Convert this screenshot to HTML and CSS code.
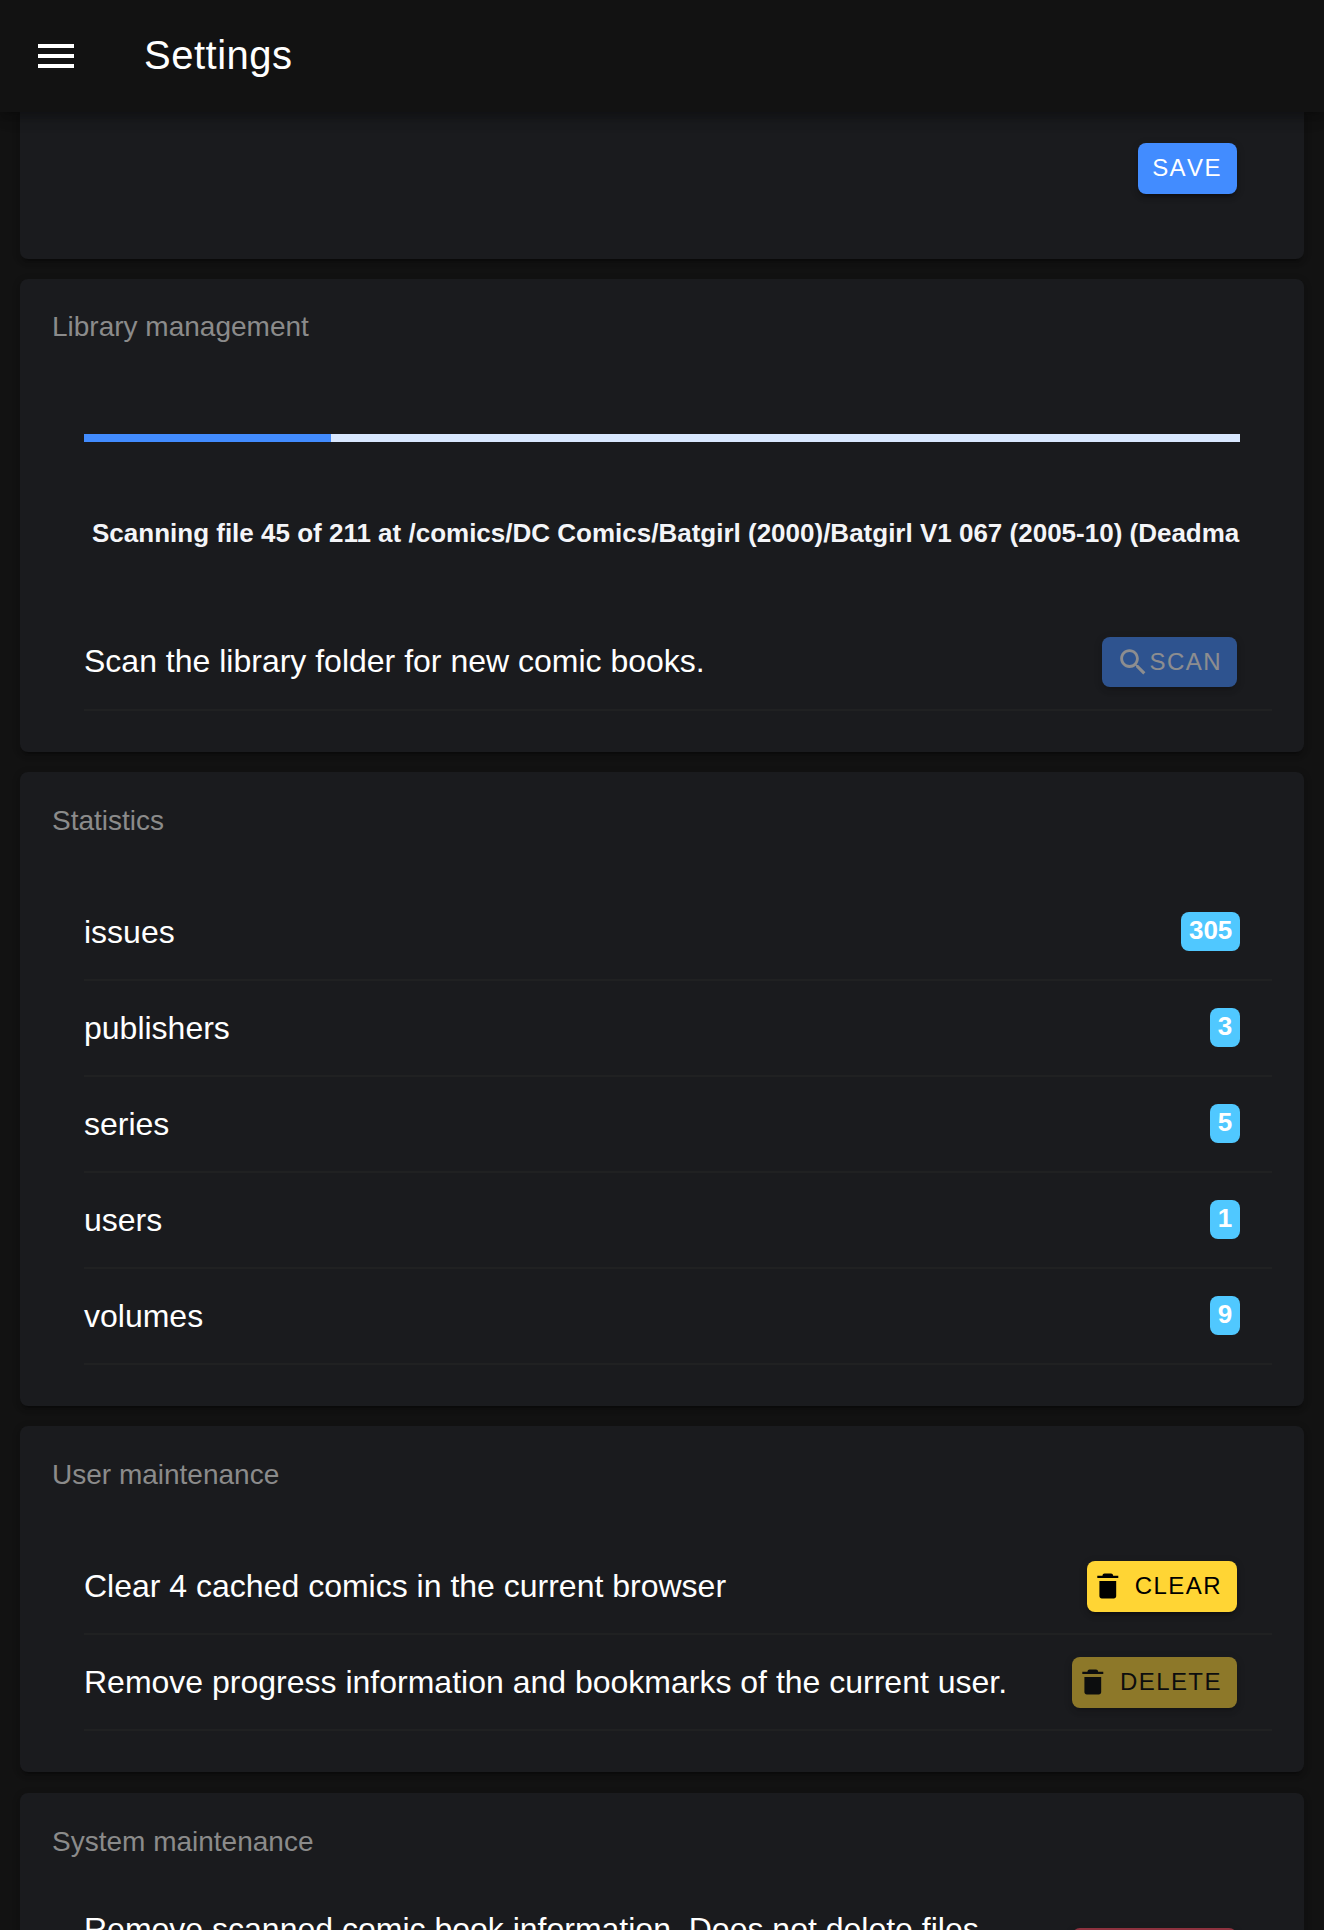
FILE: index.html
```html
<!DOCTYPE html>
<html lang="en">
<head>
<meta charset="utf-8">
<title>Settings</title>
<link rel="stylesheet" href="styles.css">
</head>
<body>
<svg class="sprite" width="0" height="0" aria-hidden="true">
  <symbol id="trash" viewBox="0 0 512 512">
    <path d="M128 184v228c0 20 16 36 36 36h184c20 0 36-16 36-36V184zM416 102h-78c-4-22-14-32-32-32H206c-18 0-28 10-32 32H96v36h320z"/>
  </symbol>
</svg>
<header class="header">
  <svg class="menu-icon" viewBox="0 0 512 512"><path d="M64 384h384v-42.7H64zm0-106.7h384v-42.6H64zM64 128v42.7h384V128z"/></svg>
  <h1 class="title">Settings</h1>
</header>
<main class="content">
  <section class="card card-scrolled">
    <button class="button primary">SAVE</button>
  </section>

  <section class="card">
    <h2 class="subtitle">Library management</h2>
    <div class="item plain"><div class="progress"><div class="progress-value" style="width:21.33%"></div></div></div>
    <div class="item plain scan-status"><span class="badge status">Scanning file 45 of 211 at /comics/DC Comics/Batgirl (2000)/Batgirl V1 067 (2005-10) (Deadma</span></div>
    <div class="item">
      <span class="label">Scan the library folder for new comic books.</span>
      <button class="button primary" disabled><svg class="icon" viewBox="0 0 512 512"><path d="M337.509 305.372h-17.501l-6.571-5.486c20.791-25.181 33.922-57.054 33.922-93.257C347.358 127.632 283.896 64 205.135 64 127.452 64 64 127.632 64 206.629s63.452 142.628 142.225 142.628c35.011 0 67.831-13.167 92.991-34.008l6.561 5.487v17.551L415.18 448 448 415.086 337.509 305.372zm-131.284 0c-54.702 0-98.463-43.887-98.463-98.743 0-54.858 43.761-98.742 98.463-98.742 54.7 0 98.462 43.884 98.462 98.742 0 54.856-43.762 98.743-98.462 98.743z"/></svg>SCAN</button>
    </div>
  </section>

  <section class="card">
    <h2 class="subtitle subtitle-low">Statistics</h2>
    <div class="item"><span class="label">issues</span><span class="badge">305</span></div>
    <div class="item"><span class="label">publishers</span><span class="badge">3</span></div>
    <div class="item"><span class="label">series</span><span class="badge">5</span></div>
    <div class="item"><span class="label">users</span><span class="badge">1</span></div>
    <div class="item"><span class="label">volumes</span><span class="badge">9</span></div>
  </section>

  <section class="card">
    <h2 class="subtitle subtitle-low">User maintenance</h2>
    <div class="item">
      <span class="label">Clear 4 cached comics in the current browser</span>
      <button class="button warning"><svg class="icon icon-start"><use href="#trash"/></svg>CLEAR</button>
    </div>
    <div class="item">
      <span class="label">Remove progress information and bookmarks of the current user.</span>
      <button class="button warning" disabled><svg class="icon icon-start"><use href="#trash"/></svg>DELETE</button>
    </div>
  </section>

  <section class="card">
    <h2 class="subtitle subtitle-low">System maintenance</h2>
    <div class="item item-top">
      <span class="label">Remove scanned comic book information. Does not delete files.</span>
      <button class="button danger" disabled><svg class="icon icon-start"><use href="#trash"/></svg>DELETE</button>
    </div>
  </section>
</main>
</body>
</html>
```
FILE: styles.css
```css
* {
  box-sizing: border-box;
}

body {
  margin: 0;
  height: 1930px;
  overflow: hidden;
  background: #121212;
  color: #fff;
  font-family: "Liberation Sans", Arial, sans-serif;
}

.sprite {
  display: none;
}

.header {
  position: relative;
  z-index: 1;
  display: flex;
  align-items: center;
  gap: 64px;
  height: 112px;
  padding: 0 32px;
  background: #121212;
  box-shadow: 0 4px 8px -2px rgba(0, 0, 0, .2), 0 8px 10px rgba(0, 0, 0, .14), 0 2px 20px rgba(0, 0, 0, .12);
}

.menu-icon {
  width: 48px;
  height: 48px;
  fill: currentColor;
}

.title {
  margin: 0 0 2px;
  font-size: 40px;
  font-weight: 400;
  letter-spacing: .0125em;
}

.content {
  display: flex;
  flex-direction: column;
  gap: 20.5px;
  height: 1818px;
  padding: 0 19.7px 0 20px;
  overflow: hidden;
}

.card {
  flex: none;
  padding: 32px 32px 40.8px;
  border-radius: 8px;
  background: #1a1b1e;
  box-shadow: 0 6px 2px -4px rgba(0, 0, 0, .2), 0 4px 4px rgba(0, 0, 0, .14), 0 2px 10px rgba(0, 0, 0, .12);
}

.card-scrolled {
  display: flex;
  justify-content: flex-end;
  height: 146.5px;
  padding: 31.3px 64px 0;
  border-radius: 0 0 8px 8px;
}

.subtitle {
  margin: 0;
  height: 81px;
  color: #8b8b8b;
  font-size: 28px;
  font-weight: 400;
  line-height: 32px;
}

.subtitle-low {
  padding-top: 1px;
}

.item {
  display: flex;
  align-items: center;
  justify-content: space-between;
  height: 96px;
  margin-left: 32px;
  padding-right: 32px;
  border-bottom: 2px solid #202122;
}

.plain {
  border-bottom-color: transparent;
}

.item-top {
  align-items: flex-start;
  height: 136px;
}

.item-top .label {
  margin-top: 5px;
}

.item-top .button {
  margin-top: 22px;
}

.label {
  font-size: 32px;
  white-space: nowrap;
}

.progress {
  width: 100%;
  height: 8px;
  margin-bottom: 2px;
  background: #d9e8ff;
}

.progress-value {
  height: 100%;
  background: #428cff;
}

.scan-status {
  margin-bottom: 30.8px;
}

.badge {
  margin-bottom: 2px;
  padding: 5px 8px 8px;
  border-radius: 8px;
  background: #50c8ff;
  font-size: 26px;
  font-weight: 700;
  line-height: 26px;
}

.status {
  width: 100%;
  padding-right: 0;
  border-radius: 0;
  background: transparent;
  color: #f4f5f8;
  white-space: nowrap;
  overflow: hidden;
}

.button {
  display: flex;
  flex: none;
  align-items: center;
  height: 50.4px;
  margin: 0 3.6px 0 0;
  padding: 0 14.8px 0 14.4px;
  border: 0;
  border-radius: 8px;
  font: 400 24px "Liberation Sans", Arial, sans-serif;
  font-kerning: none;
  letter-spacing: .06em;
  box-shadow: 0 6px 2px -4px rgba(0, 0, 0, .2), 0 4px 4px rgba(0, 0, 0, .14), 0 2px 10px rgba(0, 0, 0, .12);
}

.button:disabled {
  opacity: .5;
}

.primary {
  background: #428cff;
  color: #fff;
}

.warning {
  background: #ffd534;
  color: #000;
}

.danger {
  background: #ff4961;
  color: #fff;
}

.icon {
  width: 33.6px;
  height: 33.6px;
  margin-left: -.8px;
  fill: currentColor;
}

.icon-start {
  margin: 0 10.2px 1px -10.2px;
}
```
